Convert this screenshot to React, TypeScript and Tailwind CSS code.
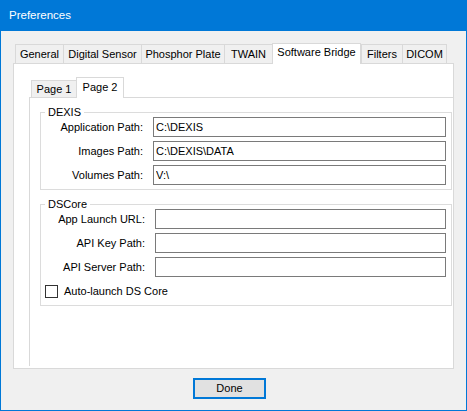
import React from "react";

const tabs = [
  { label: "General", w: "w-[48px]" },
  { label: "Digital Sensor", w: "w-[78px]" },
  { label: "Phosphor Plate", w: "w-[83px]" },
  { label: "TWAIN", w: "w-[48px]" },
  { label: "Software Bridge", w: "w-[89px]", active: true },
  { label: "Filters", w: "w-[41px]" },
  { label: "DICOM", w: "w-[45px]", last: true },
];

const dexis = [
  { label: "Application Path:", value: "C:\\DEXIS" },
  { label: "Images Path:", value: "C:\\DEXIS\\DATA" },
  { label: "Volumes Path:", value: "V:\\" },
];

const dscore = [
  { label: "App Launch URL:", value: "" },
  { label: "API Key Path:", value: "" },
  { label: "API Server Path:", value: "" },
];

function Field({ label, value, lw }: { label: string; value: string; lw: string }) {
  return (
    <div className="flex items-center h-[20px]">
      <span className={`${lw} text-right shrink-0`}>{label}</span>
      <input
        readOnly
        defaultValue={value}
        className="ml-[10px] flex-1 h-[20px] border border-[#7a7a7a] bg-white px-[2px] text-[11px] text-black outline-none"
      />
    </div>
  );
}

export default function App() {
  return (
    <div className="w-[467px] h-[411px] border border-[#0078d7] flex flex-col font-['Liberation_Sans',Arial,sans-serif] text-[11px] text-black">
      {/* Title bar */}
      <div className="h-[30px] bg-[#0078d7] text-white flex items-center pl-[8px] text-[11.5px]">
        Preferences
      </div>

      {/* Body */}
      <div className="flex-1 bg-[#f0f0f0] pt-[12px]">
        {/* Outer tabs */}
        <div className="flex items-end h-[20px] ml-[14px]">
          {tabs.map((t) =>
            t.active ? (
              <div
                key={t.label}
                className={`${t.w} h-[21px] -mb-px relative z-10 bg-white border-l border-t border-r border-[#d9d9d9] flex items-center justify-center pb-[3px]`}
              >
                {t.label}
              </div>
            ) : (
              <div
                key={t.label}
                className={`${t.w} h-[19px] bg-[#f0f0f0] border-l border-t ${t.last ? "border-r" : ""} border-[#d9d9d9] flex items-center justify-center`}
              >
                {t.label}
              </div>
            )
          )}
        </div>

        {/* Outer panel */}
        <div className="ml-[12px] w-[441px] h-[306px] border border-[#d9d9d9] bg-white flex flex-col pl-[15px] pt-[13px] pb-[2px]">
          {/* Inner tabs */}
          <div className="flex items-end h-[20px] ml-[2px]">
            <div className="w-[45px] h-[17px] bg-[#f0f0f0] border-l border-t border-[#d9d9d9] flex items-center justify-center pt-[1px]">
              Page 1
            </div>
            <div className="w-[48px] h-[21px] -mb-px relative z-10 bg-white border-l border-t border-r border-[#d9d9d9] flex items-center justify-center pb-[2px]">
              Page 2
            </div>
          </div>

          {/* Inner panel */}
          <div className="flex-1 border-l border-t border-[#d9d9d9] pl-[10px] pr-[1px]">
            <fieldset className="mt-[9px] border border-[#dcdcdc] pb-[4px] pr-[5px]">
              <legend className="ml-[4px] px-[3px] leading-[10px]">DEXIS</legend>
              <div className="flex flex-col gap-[4px]">
                {dexis.map((f) => (
                  <Field key={f.label} label={f.label} value={f.value} lw="w-[102px]" />
                ))}
              </div>
            </fieldset>

            <fieldset className="mt-[9px] border border-[#dcdcdc] pb-[7px] pr-[5px]">
              <legend className="ml-[4px] px-[3px] leading-[10px]">DSCore</legend>
              <div className="flex flex-col gap-[4px]">
                {dscore.map((f) => (
                  <Field key={f.label} label={f.label} value={f.value} lw="w-[104px]" />
                ))}
              </div>
              <div className="flex items-center h-[13px] mt-[8px] ml-[4px]">
                <span className="w-[13px] h-[13px] border border-[#333333] bg-white" />
                <span className="ml-[6px]">Auto-launch DS Core</span>
              </div>
            </fieldset>
          </div>
        </div>

        {/* Footer */}
        <div className="mt-[9px] ml-[192px]">
          <button className="w-[73px] h-[21px] border-2 border-[#0078d7] bg-[#e1e1e1] text-[11px] text-black flex items-center justify-center">
            Done
          </button>
        </div>
      </div>
    </div>
  );
}
